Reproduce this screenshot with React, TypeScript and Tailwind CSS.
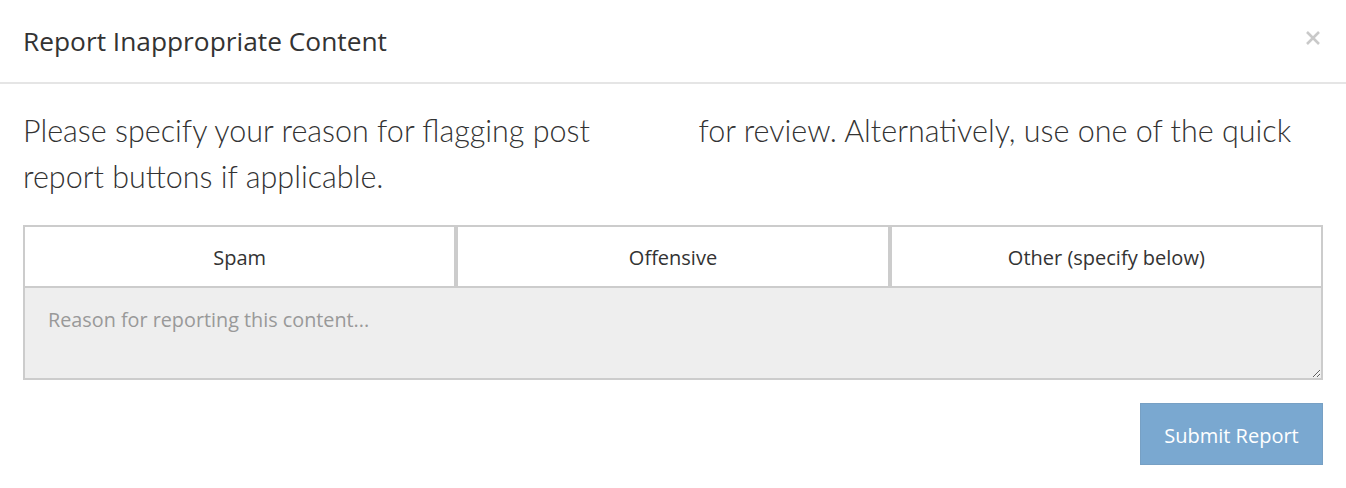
import React from "react";

const quickReasons = ["Spam", "Offensive", "Other (specify below)"];

export default function App() {
  return (
    <div
      className="w-[1346px] h-[488px] bg-white text-[#333] overflow-hidden"
      style={{ fontFamily: '"Open Sans", "Noto Sans", sans-serif' }}
    >
      {/* header */}
      <div className="h-[84px] border-b-2 border-[#e5e5e5] flex items-center justify-between pl-[23px] pr-[25px]">
        <h4 className="text-[26.3px] font-normal text-[#333] pt-[2px]">Report Inappropriate Content</h4>
        <button className="w-[16px] h-[16px] mb-[6px] text-[#c9c9c9]" aria-label="Close">
          <svg viewBox="0 0 16 16" className="w-[16px] h-[16px]">
            <path d="M2 2 L14 14 M14 2 L2 14" stroke="currentColor" strokeWidth="2.6" strokeLinecap="butt" />
          </svg>
        </button>
      </div>

      {/* body */}
      <div className="px-[23px] pt-[23px]">
        <p
          className="text-[30.5px] leading-[46px] font-light text-[#333]"
          style={{ fontFamily: 'Lato, "Open Sans", sans-serif' }}
        >
          Please specify your reason for flagging post <span className="inline-block w-[92px]" /> for review.
          Alternatively, use one of the quick report buttons if applicable.
        </p>

        <div className="mt-[26px] flex flex-col">
          <div className="flex">
            {quickReasons.map((label) => (
              <button
                key={label}
                className="flex-1 h-[63px] border-2 border-[#ccc] bg-white text-[20px] text-[#333] pt-[2px]"
              >
                {label}
              </button>
            ))}
          </div>
          <textarea
            className="block w-full h-[94px] -mt-[2px] border-2 border-[#ccc] bg-[#eee] px-[23px] pt-[17px] text-[19.8px] text-[#555] placeholder:text-[#999] outline-none"
            placeholder="Reason for reporting this content..."
          />
        </div>

        <div className="flex justify-end mt-[23px]">
          <button className="w-[183px] h-[62px] bg-[#7aa8d0] border border-[#77a0c4] text-white text-[20px] pt-[4px]">
            Submit Report
          </button>
        </div>
      </div>
    </div>
  );
}
